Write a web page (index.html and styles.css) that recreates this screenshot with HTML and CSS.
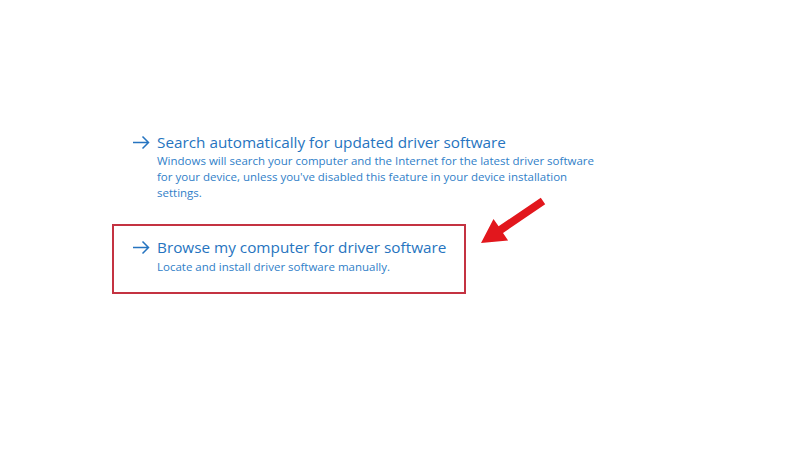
FILE: index.html
```html
<!DOCTYPE html>
<html>
<head>
<meta charset="utf-8">
<link rel="stylesheet" href="styles.css">
</head>
<body>
<main class="page">
  <div class="options">
    <div class="option first">
      <svg class="go" width="18" height="22" viewBox="0 0 18 22"><path d="M1 11.5H16.5M10.5 5.5L16.5 11.5L10.5 17.5" fill="none" stroke="#2674c0" stroke-width="1.5"/></svg>
      <div class="text">
        <div class="title">Search automatically for updated driver software</div>
        <div class="desc">Windows will search your computer and the Internet for the latest driver software for your device, unless you've disabled this feature in your device installation settings.</div>
      </div>
    </div>
    <div class="option boxed">
      <svg class="go" width="18" height="22" viewBox="0 0 18 22"><path d="M1 11.5H16.5M10.5 5.5L16.5 11.5L10.5 17.5" fill="none" stroke="#2674c0" stroke-width="1.5"/></svg>
      <div class="text">
        <div class="title">Browse my computer for driver software</div>
        <div class="desc">Locate and install driver software manually.</div>
      </div>
    </div>
  </div>
  <svg class="pointer" width="800" height="450" viewBox="0 0 800 450">
    <polygon points="481,243 493.5,218.9 498.6,226.3 540.8,197.7 545.2,204.3 503,232.9 508.1,240.4" fill="#e2171d"/>
  </svg>
</main>
</body>
</html>
```
FILE: styles.css
```css
html, body {
  margin: 0;
  padding: 0;
  background: #ffffff;
}
.page {
  position: relative;
  width: 800px;
  height: 450px;
  font-family: "Open Sans", "Noto Sans", sans-serif;
}
.options {
  padding-top: 131px;
  padding-left: 112px;
  display: flex;
  flex-direction: column;
  gap: 23px;
}
.option {
  display: flex;
  align-items: flex-start;
  gap: 7px;
  padding-left: 20px;
}
.option.boxed {
  width: 332px;
  border: 2px solid #c43241;
  padding: 10px 0 17px 18px;
}
.boxed .title {
  margin-bottom: 1px;
}
.go {
  flex: none;
  display: block;
}
.title {
  color: #2674c0;
  font-size: 15.3px;
  line-height: 22px;
}
.desc {
  color: #3080c8;
  font-size: 11.5px;
  line-height: 16px;
  width: 450px;
}
.pointer {
  position: absolute;
  left: 0;
  top: 0;
}
```
